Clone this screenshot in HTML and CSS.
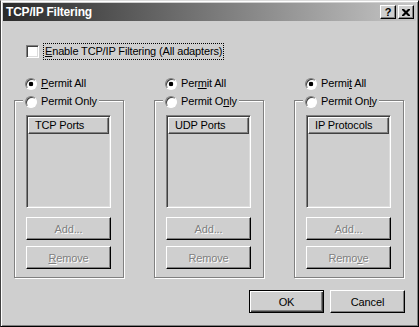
FILE: index.html
```html
<!DOCTYPE html>
<html lang="en">
<head>
    <meta charset="UTF-8">
    <title>TCP/IP Filtering</title>
    <link rel="stylesheet" href="styles.css">
</head>
<body>
    <div class="window">
        <div class="titlebar">
            <span class="title">TCP/IP Filtering</span>
            <div class="caption-buttons">
                <span class="cap-btn help">?</span>
                <span class="cap-btn close">
                    <svg width="8" height="7" viewBox="0 0 8 7">
                        <path d="M0 0h2l2 2 2-2h2v1l-2.5 2.5 2.5 2.5v1h-2l-2-2-2 2h-2v-1l2.5-2.5-2.5-2.5z" fill="#000"/>
                    </svg>
                </span>
            </div>
        </div>

        <div class="dialog">
            <div class="enable-row">
                <span class="checkbox"></span>
                <span class="focus-label"><u>E</u>nable TCP/IP Filtering (All adapters)</span>
            </div>

            <div class="columns">
                <!-- TCP -->
                <div class="column">
                    <div class="radio-row"><span class="radio checked"></span><span><u>P</u>ermit All</span></div>
                    <div class="group">
                        <div class="radio-row legend"><span class="radio"></span><span>Permit Only</span></div>
                        <div class="listbox"><div class="list-header">TCP Ports</div></div>
                        <div class="btn disabled add">Add...</div>
                        <div class="btn disabled remove"><u>R</u>emove</div>
                    </div>
                </div>

                <!-- UDP -->
                <div class="column">
                    <div class="radio-row"><span class="radio checked"></span><span>Per<u>m</u>it All</span></div>
                    <div class="group">
                        <div class="radio-row legend"><span class="radio"></span><span>Permit O<u>n</u>ly</span></div>
                        <div class="listbox"><div class="list-header">UDP Ports</div></div>
                        <div class="btn disabled add">Add...</div>
                        <div class="btn disabled remove">Remove</div>
                    </div>
                </div>

                <!-- IP -->
                <div class="column">
                    <div class="radio-row"><span class="radio checked"></span><span>Permi<u>t</u> All</span></div>
                    <div class="group">
                        <div class="radio-row legend"><span class="radio"></span><span>Permit On<u>l</u>y</span></div>
                        <div class="listbox"><div class="list-header">IP Protocols</div></div>
                        <div class="btn disabled add">Add...</div>
                        <div class="btn disabled remove">Remo<u>v</u>e</div>
                    </div>
                </div>
            </div>

            <div class="footer">
                <div class="btn default">OK</div>
                <div class="btn">Cancel</div>
            </div>
        </div>
    </div>
</body>
</html>
```

FILE: styles.css
```css
body {
    margin: 0;
    font-family: "Liberation Sans", Arial, sans-serif;
    font-size: 11px;
    letter-spacing: -0.15px;
    color: #000;
}
.window {
    width: 419px;
    height: 327px;
    box-sizing: border-box;
    background-color: #cfcfcf;
    border: 1px solid;
    border-color: #dcdcdc #000 #000 #404040;
    box-shadow: inset 1px 1px #fff, inset -1px -1px #808080;
    padding: 2px;
}
.titlebar {
    height: 18px;
    display: flex;
    align-items: center;
    justify-content: space-between;
    padding: 0 2px 0 3px;
    background: linear-gradient(to right, #2a2a2a, #c6c6c6);
}
.title {
    color: #fff;
    font-weight: bold;
    font-size: 12px;
    letter-spacing: -0.2px;
}
.caption-buttons {
    display: flex;
    gap: 2px;
}
.cap-btn {
    width: 16px;
    height: 14px;
    box-sizing: border-box;
    display: flex;
    align-items: center;
    justify-content: center;
    background-color: #cfcfcf;
    border: 1px solid;
    border-color: #fff #000 #000 #fff;
    box-shadow: inset -1px -1px #808080;
    font-weight: bold;
    font-size: 11px;
    line-height: 12px;
}
.dialog {
    padding: 22px 11px 0 11px;
}
.enable-row {
    display: flex;
    align-items: center;
    gap: 4px;
    margin-left: 12px;
    height: 17px;
}
.checkbox {
    width: 13px;
    height: 13px;
    box-sizing: border-box;
    background-color: #fff;
    border: 1px solid;
    border-color: #808080 #fff #fff #808080;
    box-shadow: inset 1px 1px #404040, inset -1px -1px #dcdcdc;
}
.focus-label {
    border: 1px dotted #000;
    padding: 0 1px;
    line-height: 15px;
}
.columns {
    display: flex;
    gap: 30px;
    margin-top: 17px;
}
.column {
    width: 110px;
}
.radio-row {
    display: flex;
    align-items: center;
    gap: 4px;
    height: 13px;
    line-height: 13px;
}
.column > .radio-row {
    margin-left: 11px;
}
.radio {
    width: 12px;
    height: 12px;
    box-sizing: border-box;
    border-radius: 50%;
    background-color: #fff;
    border: 1px solid;
    border-color: #808080 #fff #fff #808080;
    box-shadow: inset 1px 1px #404040;
}
.radio.checked {
    background: radial-gradient(circle, #000 0, #000 2px, #fff 2.6px);
}
.group {
    margin-top: 10px;
    border: 1px solid #808080;
    box-shadow: inset 1px 1px #fff, 1px 1px #fff;
    padding: 0 0 8px 11px;
}
.legend {
    width: max-content;
    margin: -6px 0 0 -3px;
    padding: 0 2px;
    background-color: #cfcfcf;
}
.listbox {
    width: 85px;
    height: 93px;
    box-sizing: border-box;
    margin-top: 7px;
    padding: 1px;
    border: 1px solid;
    border-color: #808080 #fff #fff #808080;
    box-shadow: inset 1px 1px #404040, inset -1px -1px #dcdcdc;
}
.list-header {
    height: 17px;
    box-sizing: border-box;
    padding-left: 6px;
    line-height: 15px;
    border: 1px solid;
    border-color: #fff #404040 #404040 #fff;
    box-shadow: inset -1px -1px #808080;
}
.btn {
    width: 85px;
    height: 23px;
    box-sizing: border-box;
    display: flex;
    align-items: center;
    justify-content: center;
    background-color: #cfcfcf;
    border: 1px solid;
    border-color: #fff #000 #000 #fff;
    box-shadow: inset -1px -1px #808080;
}
.btn.add {
    margin-top: 9px;
}
.btn.remove {
    margin-top: 6px;
}
.btn.disabled {
    color: #808080;
    text-shadow: 1px 1px #fff;
}
.footer {
    display: flex;
    justify-content: flex-end;
    gap: 6px;
    margin-top: 12px;
}
.footer .btn {
    width: 75px;
}
.btn.default {
    border-color: #000;
    box-shadow: inset 1px 1px #fff, inset -1px -1px #404040, inset -2px -2px #808080;
}
```
